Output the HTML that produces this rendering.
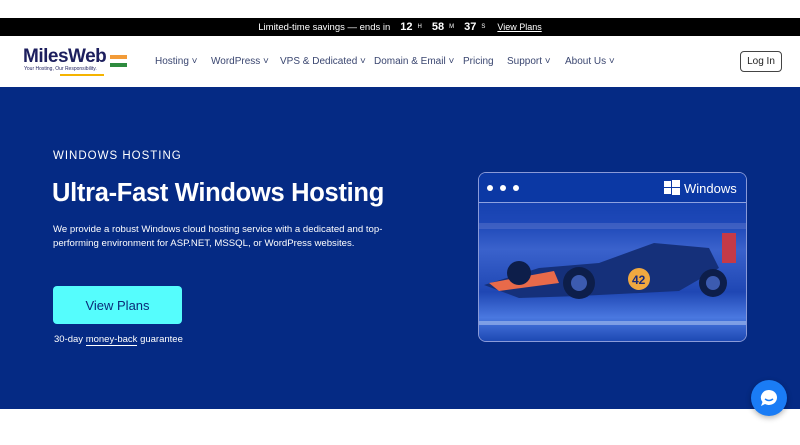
<!DOCTYPE html>
<html><head><meta charset="utf-8"><style>
*{margin:0;padding:0;box-sizing:border-box}
body{width:800px;height:445px;overflow:hidden;background:#fff;font-family:"Liberation Sans",sans-serif;position:relative}
.top{position:absolute;top:18px;left:0;width:800px;height:18px;background:#000;color:#fff;font-size:9.5px;display:flex;align-items:center;justify-content:center;gap:4px}
.top b{font-size:11px;margin-left:6px}.top small{font-size:6px;margin-left:1px}
.top u{margin-left:8px;font-size:9px}
.nav{position:absolute;top:36px;left:0;width:800px;height:51px}
.logo{position:absolute;left:23px;top:10px;color:#1d1f5e;font-weight:bold;font-size:19px;letter-spacing:-0.5px}
.tag{position:absolute;left:24px;top:30px;font-size:5px;color:#1d1f5e}
.ul{position:absolute;left:60px;top:38px;width:44px;height:2px;background:#f5b400}
.flag{position:absolute;left:110px;top:19px;width:17px;height:12px}
.menu{position:absolute;top:20px;font-size:10px;color:#3a4670}
.login{position:absolute;left:740px;top:15px;width:42px;height:21px;border:1px solid #444;border-radius:4px;font-size:10px;display:flex;align-items:center;justify-content:center;color:#222}
.hero{position:absolute;top:87px;left:0;width:800px;height:322px;background:#052a84}
.h-k{position:absolute;left:53px;top:63px;color:#fff;font-size:11.5px;letter-spacing:1px}
.h1{position:absolute;left:52px;top:92px;color:#fff;font-size:25.5px;font-weight:bold;letter-spacing:-0.3px}
.p{position:absolute;left:53px;top:136px;color:#fff;font-size:9.6px;line-height:14px;width:340px}
.btn{position:absolute;left:53px;top:199px;width:129px;height:38px;background:#55fdfd;border-radius:4px;color:#0b2a78;font-size:13px;display:flex;align-items:center;justify-content:center}
.g{position:absolute;left:54px;top:247px;color:#fff;font-size:9.5px}
.g span{border-bottom:1px solid #fff}
.card{position:absolute;left:478px;top:85px;width:269px;height:170px;border:1px solid #8a9ad8;border-radius:8px;overflow:hidden;background:#0a3aa8}
.chat{position:absolute;left:751px;top:380px;width:36px;height:36px;border-radius:50%;background:#1a7cf5;box-shadow:0 2px 6px rgba(0,0,0,.3)}
</style></head><body>
<div class="top">Limited-time savings — ends in <b>12</b><small>H</small><b>58</b><small>M</small><b>37</b><small>S</small><u>View Plans</u></div>
<div class="nav">
<div class="logo">MilesWeb</div><div class="tag">Your Hosting, Our Responsibility.</div><div class="ul"></div>
<svg class="flag" viewBox="0 0 17 12"><rect width="17" height="4" fill="#f29b38"/><rect y="4" width="17" height="4" fill="#fff"/><rect y="8" width="17" height="4" fill="#2e8b3e"/></svg>
<div class="menu" style="left:155px">Hosting ˅</div>
<div class="menu" style="left:211px">WordPress ˅</div>
<div class="menu" style="left:280px">VPS &amp; Dedicated ˅</div>
<div class="menu" style="left:374px">Domain &amp; Email ˅</div>
<div class="menu" style="left:463px">Pricing</div>
<div class="menu" style="left:507px">Support ˅</div>
<div class="menu" style="left:565px">About Us ˅</div>
<div class="login">Log In</div>
</div>
<div class="hero">
<div class="h-k">WINDOWS HOSTING</div>
<div class="h1">Ultra-Fast Windows Hosting</div>
<div class="p">We provide a robust Windows cloud hosting service with a dedicated and top-performing environment for ASP.NET, MSSQL, or WordPress websites.</div>
<div class="btn">View Plans</div>
<div class="g">30-day <span>money-back</span> guarantee</div>
<div class="card">
<svg width="269" height="170" viewBox="0 0 269 170" style="position:absolute;left:0;top:0">
<defs><linearGradient id="bg" x1="0" y1="0" x2="0" y2="1"><stop offset="0" stop-color="#0c3aa6"/><stop offset=".3" stop-color="#1e48b8"/><stop offset=".45" stop-color="#3a62cc"/><stop offset=".7" stop-color="#1f47b4"/><stop offset=".85" stop-color="#4a78e0"/><stop offset="1" stop-color="#1a45b0"/></linearGradient></defs>
<rect width="269" height="170" fill="url(#bg)"/>
<rect y="50" width="269" height="6" fill="#6a80d0" opacity=".4"/>
<rect width="269" height="29" fill="#0b38a4"/>
<line x1="0" y1="29.5" x2="269" y2="29.5" stroke="#8ea2e0"/>
<circle cx="11" cy="15" r="3" fill="#fff"/><circle cx="24" cy="15" r="3" fill="#fff"/><circle cx="37" cy="15" r="3" fill="#fff"/>
<g fill="#fff"><rect x="185" y="8" width="7" height="6"/><rect x="193" y="7" width="8" height="7"/><rect x="185" y="15" width="7" height="6"/><rect x="193" y="15" width="8" height="7"/></g>
<text x="205" y="20" fill="#fff" font-size="13" font-family="Liberation Sans">Windows</text>
<rect x="0" y="148" width="269" height="4" fill="#a8c0f0" opacity=".6"/>
<path d="M5 112 L60 95 L120 90 L175 70 L230 75 L240 95 L200 118 L100 123 L40 125 Z" fill="#15307a"/>
<path d="M10 110 L75 98 L80 110 L20 118Z" fill="#e86a4a"/>
<rect x="243" y="60" width="14" height="30" fill="#c43a48"/>
<circle cx="100" cy="110" r="16" fill="#0d1e4a"/><circle cx="100" cy="110" r="8" fill="#3c5bb0"/>
<circle cx="40" cy="100" r="12" fill="#0d1e4a"/>
<circle cx="234" cy="110" r="14" fill="#0d1e4a"/><circle cx="234" cy="110" r="7" fill="#3c5bb0"/>
<circle cx="160" cy="106" r="11" fill="#f0a840"/>
<text x="153" y="111" fill="#1a2a7a" font-size="12" font-weight="bold" font-family="Liberation Sans">42</text>
</svg>
</div>
</div>
<div class="chat"><svg width="36" height="36" viewBox="0 0 36 36"><path d="M18 10a8 7.5 0 1 1-4 14l-4 2 1.5-4A8 7.5 0 0 1 18 10z" fill="#fff"/><path d="M14 19q4 3 8 0" stroke="#1a7cf5" stroke-width="1.5" fill="none"/></svg></div>
</body></html>
